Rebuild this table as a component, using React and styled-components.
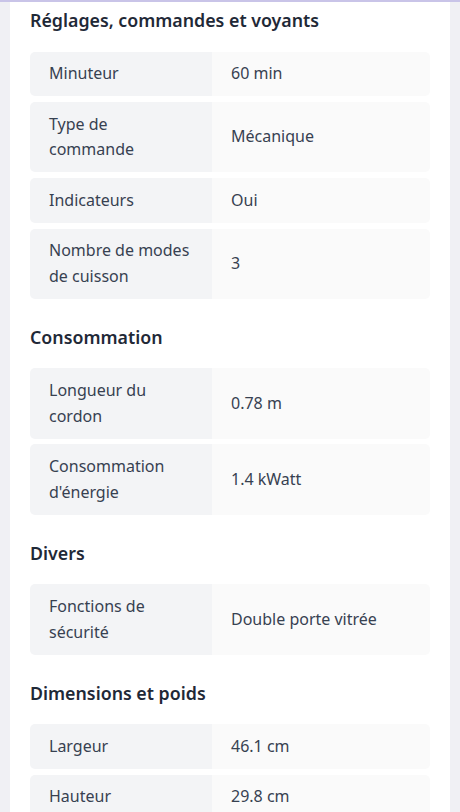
import styled, { createGlobalStyle } from "styled-components";

const GlobalStyle = createGlobalStyle`
  html, body {
    margin: 0;
    padding: 0;
    background: #f0f0f4;
    font-family: "Noto Sans", "Open Sans", Arial, sans-serif;
  }
  * {
    box-sizing: border-box;
  }
`;

const TopRule = styled.div`
  height: 2px;
  background: #c9c4e8;
`;

const Page = styled.div`
  padding: 0 10px;
  background: #f0f0f4;
  min-height: 810px;
`;

const Card = styled.div`
  background: #ffffff;
  padding: 4px 20px 24px;
  min-height: 810px;
`;

const Section = styled.section`
  & + & {
    margin-top: 24px;
  }
`;

const Heading = styled.h2`
  margin: 0 0 17.5px;
  font-size: 17.8px;
  line-height: 28px;
  font-weight: 600;
  color: #1f2937;
`;

const Rows = styled.div`
  display: flex;
  flex-direction: column;
  gap: 5.7px;
`;

const Row = styled.div`
  display: grid;
  grid-template-columns: 182px 1fr;
  border-radius: 5px;
  overflow: hidden;
  font-size: 16px;
  line-height: 1.6;
  color: #374151;
`;

const Cell = styled.div`
  display: flex;
  align-items: center;
  padding: 9.6px 19px;
  background: ${(p) => (p.$label ? "#f3f4f6" : "#fafafa")};
`;

const sections = [
  {
    title: "Réglages, commandes et voyants",
    rows: [
      ["Minuteur", "60 min"],
      ["Type de commande", "Mécanique"],
      ["Indicateurs", "Oui"],
      ["Nombre de modes de cuisson", "3"],
    ],
  },
  {
    title: "Consommation",
    rows: [
      ["Longueur du cordon", "0.78 m"],
      ["Consommation d'énergie", "1.4 kWatt"],
    ],
  },
  {
    title: "Divers",
    rows: [["Fonctions de sécurité", "Double porte vitrée"]],
  },
  {
    title: "Dimensions et poids",
    rows: [
      ["Largeur", "46.1 cm"],
      ["Hauteur", "29.8 cm"],
    ],
  },
];

export default function App() {
  return (
    <>
      <GlobalStyle />
      <TopRule />
      <Page>
        <Card>
          {sections.map((s) => (
            <Section key={s.title}>
              <Heading>{s.title}</Heading>
              <Rows>
                {s.rows.map(([label, value]) => (
                  <Row key={label}>
                    <Cell $label>{label}</Cell>
                    <Cell>{value}</Cell>
                  </Row>
                ))}
              </Rows>
            </Section>
          ))}
        </Card>
      </Page>
    </>
  );
}
